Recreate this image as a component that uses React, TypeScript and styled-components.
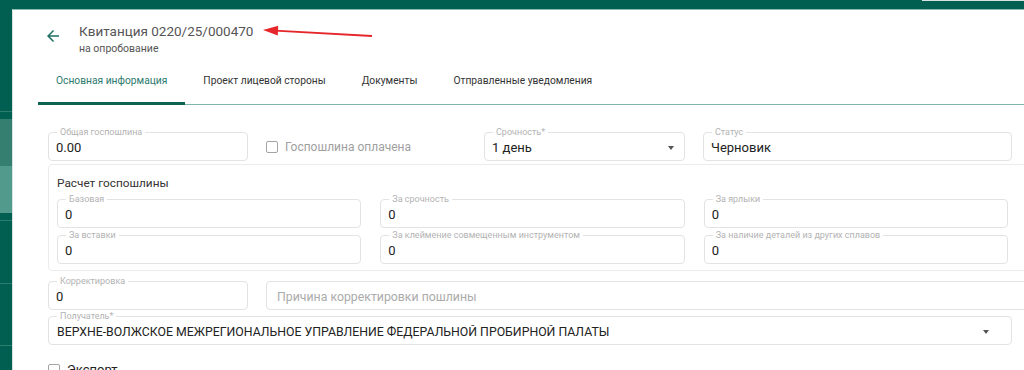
import React from "react";
import styled, { createGlobalStyle } from "styled-components";

const Global = createGlobalStyle`
  html, body { margin: 0; padding: 0; background: #fff; }
  body { font-family: Roboto, "Noto Sans", Arial, sans-serif; overflow: hidden; }
  * { box-sizing: border-box; }
`;

const Page = styled.div`
  width: 1024px;
  height: 370px;
  display: flex;
  flex-direction: column;
  overflow: hidden;
`;

const TopBar = styled.header`
  height: 9px;
  flex: none;
  background: #005f50;
  display: flex;
  justify-content: flex-end;
`;

const TopBarEdge = styled.div`
  width: 102px;
  height: 1px;
  background: #d3e3df;
`;

const Body = styled.div`
  flex: 1;
  display: flex;
  min-height: 0;
`;

const Sidebar = styled.nav`
  width: 12px;
  flex: none;
  display: flex;
  flex-direction: column;
  background: #005f50;
`;

const SideSeg = styled.div<{ $h?: number; $c: string }>`
  flex: ${(p) => (p.$h ? "none" : "1")};
  height: ${(p) => (p.$h ? `${p.$h}px` : "auto")};
  background: ${(p) => p.$c};
`;

const Content = styled.main`
  flex: 1;
  position: relative;
  background: #fff;
  border-top: 1px solid #86bbb0;
  border-left: 1px solid #d5e4e0;
  overflow: hidden;
`;

const Header = styled.div`
  display: flex;
  align-items: flex-start;
  height: 49px;
  padding: 13px 0 0 31px;
`;

const BackButton = styled.button`
  width: 18px;
  height: 18px;
  margin-top: 4px;
  padding: 0;
  border: 0;
  background: none;
  color: #1f6f62;
  display: flex;
  cursor: pointer;
`;

const TitleBlock = styled.div`
  display: flex;
  flex-direction: column;
  margin-left: 17px;
`;

const Title = styled.h1`
  margin: 0;
  font-size: 13.5px;
  line-height: 16px;
  font-weight: 400;
  color: #555;
`;

const Subtitle = styled.div`
  margin-top: 3px;
  font-size: 10.5px;
  line-height: 13px;
  color: #555;
`;

const Pointer = styled.svg`
  position: absolute;
  left: 242px;
  top: 10px;
  width: 130px;
  height: 30px;
  overflow: visible;
`;

const TabBar = styled.div`
  display: flex;
  margin-left: 25px;
  border-bottom: 1px solid #7fb5aa;
`;

const Tab = styled.div<{ $active?: boolean }>`
  height: 46px;
  margin-bottom: -1px;
  padding: 0 18px;
  display: flex;
  align-items: center;
  font-size: 10.25px;
  color: ${(p) => (p.$active ? "#2b7a6d" : "#333")};
  border-bottom: 3px solid ${(p) => (p.$active ? "#0b6552" : "transparent")};
  white-space: nowrap;
`;

const Form = styled.div`
  display: flex;
  flex-direction: column;
  padding: 27px 12px 0 35px;
`;

const TopRow = styled.div`
  display: grid;
  grid-template-columns: 200px 200px 201px 1fr;
  column-gap: 18px;
`;

const PairRow = styled.div<{ $mt: number }>`
  display: grid;
  grid-template-columns: 200px 1fr;
  column-gap: 18px;
  margin-top: ${(p) => p.$mt}px;
  margin-right: -20px;
`;

const FullRow = styled.div<{ $mt: number }>`
  display: flex;
  margin-top: ${(p) => p.$mt}px;
`;

const Box = styled.div<{ $pl?: number; $fs?: number }>`
  position: relative;
  flex: 1;
  height: 29px;
  border: 1px solid #e3e3e3;
  border-radius: 4px;
  padding: 2px 8px 0 ${(p) => p.$pl ?? 7}px;
  display: flex;
  align-items: center;
  font-size: ${(p) => p.$fs ?? 13}px;
  color: #222;
  white-space: nowrap;
  min-width: 0;
`;

const FloatLabel = styled.span`
  position: absolute;
  top: -6px;
  left: 8px;
  padding: 0 3px;
  background: #fff;
  font-size: 9px;
  line-height: 10px;
  color: #b3b3b3;
  white-space: nowrap;
`;

const Value = styled.span`
  flex: 1;
  overflow: hidden;
`;

const Placeholder = styled.span`
  flex: 1;
  color: #ababab;
  padding-left: 3px;
  font-size: 12.3px;
`;

const Caret = styled.span<{ $mr: number }>`
  width: 0;
  height: 0;
  margin-right: ${(p) => p.$mr}px;
  border-left: 3.5px solid transparent;
  border-right: 3.5px solid transparent;
  border-top: 4px solid #555;
`;

const CheckLine = styled.label<{ $muted?: boolean }>`
  display: flex;
  align-items: center;
  gap: 7px;
  font-size: ${(p) => (p.$muted ? 12 : 13)}px;
  color: ${(p) => (p.$muted ? "#a0a0a0" : "#222")};
`;

const CheckBox = styled.span`
  width: 12px;
  height: 12px;
  border: 1.5px solid #a3a3a3;
  border-radius: 2px;
  flex: none;
`;

const Group = styled.section`
  margin-top: 3px;
  margin-right: -20px;
  border: 1px solid #ececec;
  border-radius: 4px;
  padding: 11px 23px 6px 8px;
`;

const GroupTitle = styled.div`
  font-size: 11.8px;
  line-height: 14px;
  color: #333;
  margin-bottom: 9px;
`;

const GroupGrid = styled.div`
  display: grid;
  grid-template-columns: repeat(3, 1fr);
  column-gap: 19px;
  row-gap: 7px;
`;

const ExportRow = styled.div`
  margin-top: 17px;
`;

const sideSegs: { h?: number; c: string }[] = [
  { h: 102, c: "#005f50" },
  { h: 1, c: "#2c7d6d" },
  { h: 7, c: "#005f50" },
  { h: 47, c: "#357f71" },
  { h: 47, c: "#529a8b" },
  { h: 7, c: "#005f50" },
  { h: 1, c: "#2c7d6d" },
  { h: 62, c: "#005f50" },
  { h: 1, c: "#2c7d6d" },
  { h: 61, c: "#005f50" },
  { h: 1, c: "#2c7d6d" },
  { c: "#005f50" },
];

const tabs = [
  "Основная информация",
  "Проект лицевой стороны",
  "Документы",
  "Отправленные уведомления",
];

const groupFields = [
  "Базовая",
  "За срочность",
  "За ярлыки",
  "За вставки",
  "За клеймение совмещенным инструментом",
  "За наличие деталей из других сплавов",
];

function Field({ label, value }: { label: string; value: string }) {
  return (
    <Box>
      <FloatLabel>{label}</FloatLabel>
      <Value>{value}</Value>
    </Box>
  );
}

export default function App() {
  return (
    <Page>
      <Global />
      <TopBar>
        <TopBarEdge />
      </TopBar>
      <Body>
        <Sidebar>
          {sideSegs.map((s, i) => (
            <SideSeg key={i} $h={s.h} $c={s.c} />
          ))}
        </Sidebar>
        <Content>
          <Header>
            <BackButton aria-label="Назад">
              <svg width="18" height="18" viewBox="0 0 24 24" fill="currentColor">
                <path d="M20 11H7.83l5.59-5.59L12 4l-8 8 8 8 1.41-1.41L7.83 13H20v-2z" />
              </svg>
            </BackButton>
            <TitleBlock>
              <Title>Квитанция 0220/25/000470</Title>
              <Subtitle>на опробование</Subtitle>
            </TitleBlock>
          </Header>
          <Pointer viewBox="0 0 130 30">
            <line x1="20" y1="10.7" x2="117" y2="16" stroke="#e5262b" strokeWidth="1.8" />
            <polygon points="8,10 23.2,5.8 22.8,15.6" fill="#e5262b" />
          </Pointer>
          <TabBar>
            {tabs.map((t, i) => (
              <Tab key={t} $active={i === 0}>
                {t}
              </Tab>
            ))}
          </TabBar>
          <Form>
            <TopRow>
              <Field label="Общая госпошлина" value="0.00" />
              <CheckLine $muted>
                <CheckBox />
                Госпошлина оплачена
              </CheckLine>
              <Box>
                <FloatLabel>Срочность*</FloatLabel>
                <Value>1 день</Value>
                <Caret $mr={2} />
              </Box>
              <Field label="Статус" value="Черновик" />
            </TopRow>
            <Group>
              <GroupTitle>Расчет госпошлины</GroupTitle>
              <GroupGrid>
                {groupFields.map((f) => (
                  <Field key={f} label={f} value="0" />
                ))}
              </GroupGrid>
            </Group>
            <PairRow $mt={10}>
              <Field label="Корректировка" value="0" />
              <Box>
                <Placeholder>Причина корректировки пошлины</Placeholder>
              </Box>
            </PairRow>
            <FullRow $mt={6}>
              <Box $pl={8} $fs={12.3}>
                <FloatLabel>Получатель*</FloatLabel>
                <Value>ВЕРХНЕ-ВОЛЖСКОЕ МЕЖРЕГИОНАЛЬНОЕ УПРАВЛЕНИЕ ФЕДЕРАЛЬНОЙ ПРОБИРНОЙ ПАЛАТЫ</Value>
                <Caret $mr={14} />
              </Box>
            </FullRow>
            <ExportRow>
              <CheckLine>
                <CheckBox />
                Экспорт
              </CheckLine>
            </ExportRow>
          </Form>
        </Content>
      </Body>
    </Page>
  );
}
